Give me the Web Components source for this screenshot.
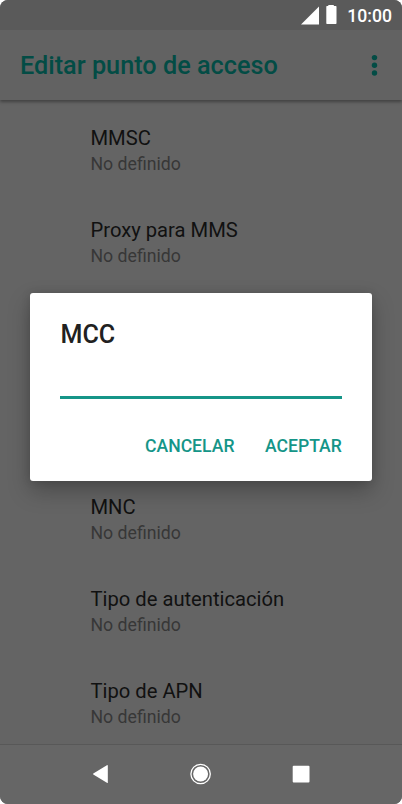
<!DOCTYPE html>
<html lang="es">
<head>
<meta charset="utf-8">
<title>Editar punto de acceso</title>
<style>
body { margin: 0; background: #fff; font-family: Roboto, "Liberation Sans", sans-serif; overflow: hidden; }
</style>
</head>
<body>
<phone-screen>
  <status-bar slot="top" time="10:00"></status-bar>
  <app-bar slot="top">Editar punto de acceso</app-bar>
  <setting-row label="MMSC">No definido</setting-row>
  <setting-row label="Proxy para MMS">No definido</setting-row>
  <list-gap></list-gap>
  <setting-row label="MNC">No definido</setting-row>
  <setting-row label="Tipo de autenticación">No definido</setting-row>
  <setting-row label="Tipo de APN">No definido</setting-row>
  <nav-bar slot="bottom"></nav-bar>
  <edit-dialog slot="overlay" label="MCC">
    <dialog-button width="90">CANCELAR</dialog-button>
    <dialog-button width="77">ACEPTAR</dialog-button>
  </edit-dialog>
</phone-screen>
<script>
const define = (name, html, setup) => customElements.define(name, class extends HTMLElement {
  constructor() {
    super();
    const t = document.createElement('template');
    t.innerHTML = html;
    this.attachShadow({ mode: 'open' }).append(t.content.cloneNode(true));
  }
  connectedCallback() { if (setup) setup(this, this.shadowRoot); }
});

define('phone-screen', `
<style>
:host { display: flex; flex-direction: column; position: relative; width: 402px; height: 804px; background: #646464; border-radius: 8px; overflow: hidden; }
main { flex: 1; min-height: 0; padding-top: 22px; overflow: hidden; }
.overlay { position: absolute; left: 30px; top: 293px; }
</style>
<slot name="top"></slot><main><slot></slot></main><slot name="bottom"></slot>
<div class="overlay"><slot name="overlay"></slot></div>`);

define('status-bar', `
<style>
:host { display: flex; box-sizing: border-box; height: 30px; padding: 0 10px 0 0; justify-content: flex-end; align-items: center; background: #5a5a5a; color: #fff; font-size: 17.6px; font-weight: 500; z-index: 2; }
svg { display: block; }
time { width: 46px; margin-left: 9px; padding-top: 2px; height: 28px; line-height: 28px; white-space: nowrap; text-align: right; }
</style>
<svg width="36" height="30" fill="#fff"><path d="M18 6.5V24.5H0z"/><path d="M25.3 6.6Q25.3 6 26 6H27.3V5H32.8V6H34.8Q35.5 6 35.5 6.7V23.3Q35.5 24 34.8 24H26Q25.3 24 25.3 23.3z"/></svg>
<time></time>`, (h, r) => r.querySelector('time').textContent = h.getAttribute('time'));

define('app-bar', `
<style>
:host { display: flex; box-sizing: border-box; height: 70px; padding: 0 24px 0 20px; align-items: center; justify-content: space-between; background: #626262; color: #034c45; font-size: 25.25px; font-weight: 500; box-shadow: 0 2px 3px rgba(0,0,0,.35); z-index: 1; white-space: nowrap; }
svg { display: block; }
</style>
<span><slot></slot></span>
<svg width="7" height="22" fill="#034c45"><circle cx="3.5" cy="3.6" r="2.7"/><circle cx="3.5" cy="11.3" r="2.7"/><circle cx="3.5" cy="19" r="2.7"/></svg>`);

define('setting-row', `
<style>
:host { display: block; height: 92px; padding-left: 90.5px; white-space: nowrap; }
.label { font-size: 20.2px; line-height: 32px; color: #111; }
.value { font-size: 17.7px; line-height: 20px; color: #373737; }
</style>
<div class="label"></div><div class="value"><slot></slot></div>`, (h, r) => r.querySelector('.label').textContent = h.getAttribute('label'));

define('list-gap', `<style>:host { display: block; height: 185px; }</style>`);

define('nav-bar', `
<style>
:host { display: flex; box-sizing: border-box; height: 60px; padding-bottom: 1.6px; border-top: 1px solid #585858; background: #666; justify-content: center; align-items: center; gap: 78px; }
svg { display: block; }
</style>
<svg width="22" height="22" fill="#fff"><path d="M3.3 10.6L16.9 2.2Q17.8 1.8 17.8 2.7V19.4Q17.8 20.3 16.9 19.8L3.3 11.4Q2.7 11 3.3 10.6z"/></svg>
<svg width="22" height="22"><circle cx="10.6" cy="11" r="9.7" fill="none" stroke="#fff" stroke-width="1.3"/><circle cx="10.6" cy="11" r="7.5" fill="#fff"/></svg>
<svg width="22" height="22"><rect x="2.7" y="2.7" width="16.8" height="16.8" rx="1" fill="#fff"/></svg>`);

define('edit-dialog', `
<style>
:host { display: flex; flex-direction: column; box-sizing: border-box; width: 342px; height: 188px; padding: 25px 30px 0; background: #fff; border-radius: 3px; box-shadow: 0 10px 22px rgba(0,0,0,.26), 0 0 10px rgba(0,0,0,.12); }
h2 { margin: 0 0 0 .5px; font-size: 25.1px; line-height: 34px; font-weight: 500; color: #212121; }
.field { height: 44px; border-bottom: 3px solid #159588; }
footer { display: flex; justify-content: flex-end; gap: 30px; margin-top: 35px; }
</style>
<h2></h2><div class="field"></div><footer><slot></slot></footer>`, (h, r) => r.querySelector('h2').textContent = h.getAttribute('label'));

define('dialog-button', `
<style>
:host { display: block; color: #159588; font-size: 17.6px; line-height: 24px; font-weight: 500; white-space: nowrap; }
</style>
<slot></slot>`, h => h.style.width = h.getAttribute('width') + 'px');
</script>
</body>
</html>
